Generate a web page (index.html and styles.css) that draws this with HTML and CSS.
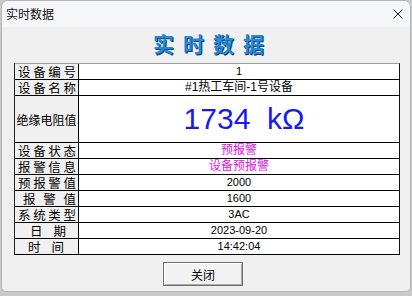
FILE: index.html
```html
<!DOCTYPE html>
<html lang="zh-CN">
<head>
<meta charset="utf-8">
<title>实时数据</title>
<link rel="stylesheet" href="styles.css">
</head>
<body>
<div class="window">
  <div class="titlebar">
    <span class="title">实时数据</span>
    <svg class="close" width="10" height="10" viewBox="0 0 10 10"><path d="M0.5 0.5L9.5 9.5M9.5 0.5L0.5 9.5" stroke="#222" stroke-width="1" fill="none"/></svg>
  </div>
  <div class="heading">实时数据</div>
  <div class="grid">
    <div class="lbl">设备编号</div><div class="val num">1</div>
    <div class="lbl">设备名称</div><div class="val">#1热工车间-1号设备</div>
    <div class="lbl big-lbl">绝缘电阻值</div><div class="val big">1734&nbsp; kΩ</div>
    <div class="lbl">设备状态</div><div class="val warn">预报警</div>
    <div class="lbl">报警信息</div><div class="val warn">设备预报警</div>
    <div class="lbl">预报警值</div><div class="val num">2000</div>
    <div class="lbl w3">报警值</div><div class="val num">1600</div>
    <div class="lbl">系统类型</div><div class="val num">3AC</div>
    <div class="lbl w2">日期</div><div class="val num">2023-09-20</div>
    <div class="lbl w2b">时间</div><div class="val num">14:42:04</div>
  </div>
  <div class="actions">
    <button class="btn">关闭</button>
  </div>
</div>
</body>
</html>
```

FILE: styles.css
```css
html, body {
  margin: 0;
  padding: 0;
}
body {
  width: 412px;
  height: 296px;
  background: #c9c9c9;
  font-family: "Noto Sans CJK SC", sans-serif;
  overflow: hidden;
}
.window {
  box-sizing: border-box;
  margin-left: 1px;
  width: 410px;
  height: 292px;
  background: #f0f0f0;
  border: 1px solid #b4b4b4;
  border-radius: 7px 7px 5px 5px;
  overflow: hidden;
}
.titlebar {
  height: 26px;
  display: flex;
  align-items: center;
  justify-content: space-between;
  padding: 0 7px 0 4px;
  background: #f5f6f8;
}
.title {
  font-size: 12px;
  line-height: 14px;
  color: #111;
}
.close {
  display: block;
}
.heading {
  height: 36px;
  box-sizing: border-box;
  padding: 1px 0 0 14px;
  text-align: center;
  font-size: 21px;
  line-height: 30px;
  font-weight: 700;
  letter-spacing: 9px;
  color: #2588d0;
  text-shadow: 1px 1px 0 #123f78;
}
.grid {
  margin-left: 12px;
  width: 386px;
  box-sizing: border-box;
  display: grid;
  grid-template-columns: 64px 1fr;
  grid-template-rows: 16px 16px 47px repeat(7, 16px);
  border-top: 1px solid #9a9a9a;
  border-left: 1px solid #222;
  border-right: 1px solid #111;
  background: #fff;
}
.lbl, .val {
  box-sizing: border-box;
  border-bottom: 1px solid #000;
  display: flex;
  align-items: center;
}
.lbl {
  border-right: 1px solid #000;
  background: #f0f0f0;
  font-size: 12.5px;
  line-height: 15px;
  color: #000;
  padding: 0 2px 0 3px;
  display: block;
  text-align: justify;
  text-align-last: justify;
}
.lbl.w3 { padding-left: 8px; }
.lbl.w2 { padding-left: 15px; padding-right: 12px; }
.lbl.w2b { padding-left: 13px; padding-right: 14px; }
.lbl.big-lbl {
  display: flex;
  align-items: center;
  justify-content: center;
  text-align-last: auto;
  font-size: 12px;
  padding: 0;
}
.val {
  justify-content: center;
  font-family: "Liberation Sans", "Noto Sans CJK SC", sans-serif;
  font-size: 12px;
  line-height: 15px;
  color: #000;
}
.val.num {
  font-size: 11px;
}
.val.warn {
  color: #e810e8;
}
.val.big {
  font-size: 30px;
  line-height: 46px;
  color: #1818f0;
  padding-left: 10px;
}
.actions {
  padding: 7px 0 0 161px;
}
.btn {
  display: block;
  width: 80px;
  height: 24px;
  margin: 0;
  padding: 0;
  box-sizing: border-box;
  background: #f2f2f2;
  border: 1px solid #6f6f6f;
  box-shadow: inset 1px 1px 0 #ffffff, inset -1px -1px 0 #a8a8a8;
  font-family: "Noto Sans CJK SC", sans-serif;
  font-size: 12px;
  color: #000;
}
```
